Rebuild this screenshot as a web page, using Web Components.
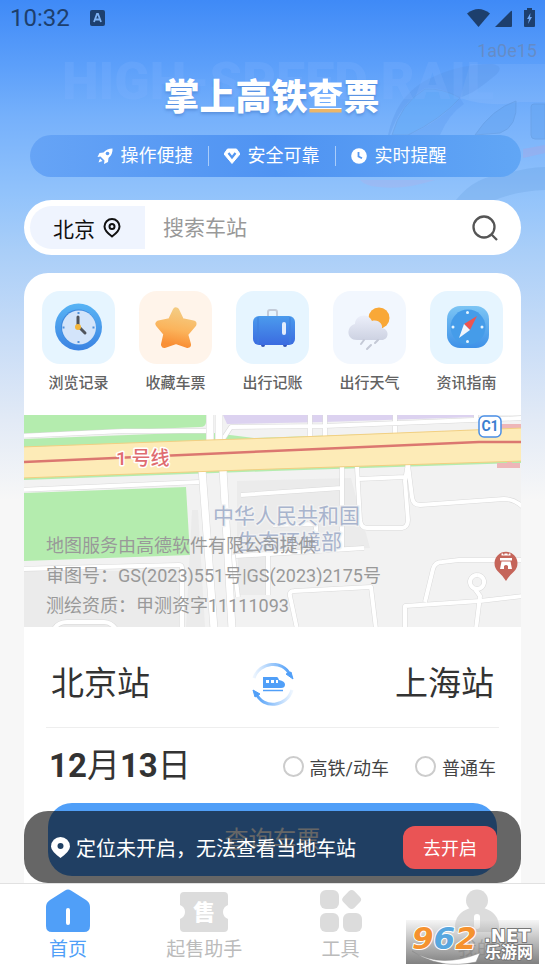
<!DOCTYPE html>
<html lang="zh-CN">
<head>
<meta charset="UTF-8">
<meta name="viewport" content="width=device-width, initial-scale=1">
<title>掌上高铁查票</title>
<style>
  body {
    margin: 0;
    background: #f7f7f7;
    color: #333;
    font-family: Roboto, "Noto Sans CJK SC", sans-serif;
  }
</style>
</head>
<body>
<app-screen>
  <status-bar slot="top" time="10:32"></status-bar>
  <hero-banner slot="top" tag="1a0e15" backdrop="HIGH-SPEED RAIL"></hero-banner>
  <search-bar slot="top" city="北京" hint="搜索车站"></search-bar>

  <feature-item slot="feature" label="浏览记录" tint="#e6f5ff">
    <svg viewBox="0 0 73 73">
      <defs><linearGradient id="ring" x1="0" y1="0" x2="0" y2="1"><stop offset="0" stop-color="#58b4f5"/><stop offset="1" stop-color="#3b83e2"/></linearGradient></defs>
      <circle cx="36.500" cy="36" r="23.500" fill="url(#ring)"/>
      <circle cx="36.500" cy="36" r="17.500" fill="#3f8ade"/>
      <circle cx="37" cy="36.500" r="17" fill="#d3e4fa"/>
      <path d="M36.500 21v2M36.500 50v2M20.500 36.500h2M50.500 36.500h2" stroke="#4f90dc" stroke-width="2"/>
      <path d="M36 36V26" stroke="#50545c" stroke-width="3" stroke-linecap="round"/>
      <path d="M37 36l6 6" stroke="#50545c" stroke-width="3" stroke-linecap="round"/>
      <circle cx="36" cy="36" r="3" fill="#f4b63b"/>
    </svg>
  </feature-item>
  <feature-item slot="feature" label="收藏车票" tint="#fff4ea">
    <svg viewBox="0 0 73 73">
      <defs><linearGradient id="star" x1="0.600" y1="0" x2="0.400" y2="1"><stop offset="0" stop-color="#f4ca80"/><stop offset=".55" stop-color="#fbb45c"/><stop offset="1" stop-color="#f98f35"/></linearGradient></defs>
      <path d="M37 20l5 10.500 12 2.500-8.500 10 3 10.500-11.500-4-11.500 4 2.500-11-8-9.500 12-2.500z" fill="url(#star)" stroke="url(#star)" stroke-width="7" stroke-linejoin="round"/>
    </svg>
  </feature-item>
  <feature-item slot="feature" label="出行记账" tint="#e6f5ff">
    <svg viewBox="0 0 73 73">
      <defs><linearGradient id="bag" x1="0" y1="0" x2="0" y2="1"><stop offset="0" stop-color="#4b9bed"/><stop offset="1" stop-color="#3b6be0"/></linearGradient></defs>
      <path d="M32 26v-5q0-2 2-2h5q2 0 2 2v5" fill="none" stroke="#c3cbd8" stroke-width="2"/>
      <circle cx="27" cy="54" r="2" fill="#3354b5"/><circle cx="49" cy="54" r="2" fill="#3354b5"/>
      <rect x="17" y="25" width="42" height="29" rx="6" fill="url(#bag)"/>
      <path d="M22 26v27M54 26v27" stroke="#3f80dd" stroke-width="1"/>
      <rect x="46" y="31" width="4" height="13" rx="2" fill="#e3edfc"/>
    </svg>
  </feature-item>
  <feature-item slot="feature" label="出行天气" tint="#f2f7fe">
    <svg viewBox="0 0 73 73">
      <defs><linearGradient id="cloud" x1="0" y1="0" x2="0" y2="1"><stop offset="0" stop-color="#eceffa"/><stop offset="1" stop-color="#cdd2e2"/></linearGradient></defs>
      <circle cx="46" cy="27" r="10.500" fill="#f9a837"/>
      <path d="M24 49c-11 0-11-14-2-16 0-9 13-12 17-3 7-2 11 4 10 7 9 2 6 13-1 12z" fill="url(#cloud)"/>
      <path d="M31 49l-3 4M45 49l-3 3M38 54l-4 4" stroke="#c4c9d6" stroke-width="2" stroke-linecap="round"/>
    </svg>
  </feature-item>
  <feature-item slot="feature" label="资讯指南" tint="#e6f5ff">
    <svg viewBox="0 0 73 73">
      <defs><linearGradient id="dial" x1="0" y1="0" x2="0" y2="1"><stop offset="0" stop-color="#7cc5f4"/><stop offset="1" stop-color="#3e91e8"/></linearGradient></defs>
      <rect x="17" y="15" width="42" height="42" rx="13" fill="url(#dial)"/>
      <circle cx="38" cy="36" r="17.500" fill="#459ce9"/>
      <circle cx="37.500" cy="21.500" r="1.500" fill="#e7f5ff"/><circle cx="37.500" cy="50.500" r="1.500" fill="#e7f5ff"/>
      <circle cx="23" cy="36" r="1.500" fill="#e7f5ff"/><circle cx="52" cy="36" r="1.500" fill="#e7f5ff"/>
      <path d="M47 25L34 33l6 6z" fill="#ed5450"/>
      <path d="M29 47l5-14 6 6z" fill="#f2f6fc"/>
    </svg>
  </feature-item>

  <station-map slot="body"></station-map>
  <trip-form slot="body" from="北京站" to="上海站" action="查询车票"></trip-form>
  <location-toast slot="toast" action="去开启">定位未开启，无法查看当地车站</location-toast>

  <tab-item slot="tab" label="首页" active>
    <svg viewBox="0 0 50 44">
      <path d="M22 1.500q3-2 6 0L43 11q4 2.500 4 7v19q0 6-6 6H9q-6 0-6-6V18q0-4.500 4-7z" fill="#509ff8"/>
      <path d="M25 21v13" stroke="#fff" stroke-width="4" stroke-linecap="round"/>
    </svg>
  </tab-item>
  <tab-item slot="tab" label="起售助手">
    <svg viewBox="0 0 50 44">
      <path d="M5 3h40q4 0 4 4v9q-5 2-5 7t5 7v9q0 4-4 4H5q-4 0-4-4v-9q5-2 5-7t-5-7V7q0-4 4-4z" fill="#dcdcdc"/>
      <text x="25" y="31" text-anchor="middle" font-size="22" font-weight="900" fill="#fff">售</text>
    </svg>
  </tab-item>
  <tab-item slot="tab" label="工具">
    <svg viewBox="0 0 50 44" fill="#dcdcdc">
      <rect x="4" y="1" width="19" height="19" rx="6"/>
      <rect x="28" y="3" width="15.500" height="15.500" rx="4" transform="rotate(45 36 10.500)"/>
      <rect x="4" y="24" width="19" height="19" rx="6"/>
      <rect x="27" y="24" width="19" height="19" rx="6"/>
    </svg>
  </tab-item>
  <tab-item slot="tab" label="我的">
    <svg viewBox="0 0 50 44">
      <circle cx="25" cy="11.500" r="11" fill="#dcdcdc"/>
      <path d="M18 19h14q15 5 15 19 0 5-5 5H8q-5 0-5-5 0-14 15-19z" fill="#dcdcdc"/>
      <path d="M25 28v9" stroke="#fff" stroke-width="6" stroke-linecap="round"/>
    </svg>
  </tab-item>
  <site-stamp slot="stamp"></site-stamp>
</app-screen>

<script>
class BaseElement extends HTMLElement {
  constructor() {
    super();
    this.attachShadow({ mode: "open" });
  }

  connectedCallback() {
    const template = document.createElement("template");
    template.innerHTML = this.getStyles() + this.getTemplate();
    this.shadowRoot.replaceChildren(template.content.cloneNode(true));
  }
}

class AppScreen extends BaseElement {
  getTemplate() {
    return `
      <main>
        <slot name="top"></slot>
        <section class="card">
          <div class="features"><slot name="feature"></slot></div>
          <slot name="body"></slot>
        </section>
        <div class="toast"><slot name="toast"></slot></div>
      </main>
      <nav>
        <slot name="tab"></slot>
        <div class="stamp"><slot name="stamp"></slot></div>
      </nav>
    `;
  }

  getStyles() {
    return `
      <style>
        :host {
          display: flex;
          flex-direction: column;
          min-height: 100vh;
          background: linear-gradient(#3f8af7 0, #5c9ffa 65px, #75b0fb 115px, #92c3fb 195px, #a9cef8 250px, #c5dbf7 330px, #e2eaf6 420px, #f7f7f7 500px);
        }
        main {
          position: relative;
          flex: 1;
          display: flex;
          flex-direction: column;
        }
        .card {
          flex: 1;
          margin: 18px 24px 0;
          background: #fff;
          border-radius: 24px 24px 0 0;
        }
        .features {
          display: grid;
          grid-template-columns: repeat(5, 1fr);
          gap: 24px;
          padding: 18px 18px 21px;
        }
        .toast {
          position: absolute;
          left: 24px;
          right: 24px;
          bottom: 0;
        }
        nav {
          position: relative;
          display: grid;
          grid-template-columns: repeat(4, 1fr);
          padding: 5px 0 3px;
          border-top: 1px solid #e1e1e1;
          background: #fff;
        }
        .stamp {
          position: absolute;
          right: 6px;
          bottom: 6px;
        }
      </style>
    `;
  }
}
customElements.define("app-screen", AppScreen);

class StatusBar extends BaseElement {
  getTemplate() {
    return `
      <span class="time">${this.getAttribute("time")}</span>
      <svg width="15" height="16" viewBox="0 0 15 16">
        <rect width="15" height="16" rx="2" fill="#1d406f"/>
        <path d="M4 12l3-8h1l3 8M5 9.500h5" stroke="#7db1f2" stroke-width="1.800" fill="none"/>
      </svg>
      <div class="signals">
        <svg width="68" height="20" viewBox="0 0 68 20" fill="#1d3f6d">
          <path d="M0 5.500Q11.500-3.500 23 5.500L11.500 19z"/>
          <path d="M28 19L44 3q1-1 1 1v14q0 1-1 1z"/>
          <path d="M57 2h3V0h5v2h3v16q0 1-1 1h-9q-1 0-1-1z"/>
          <path d="M63.500 5L60 11h2l-1 5 4-7h-2z" fill="#6ca6f4"/>
        </svg>
      </div>
    `;
  }

  getStyles() {
    return `
      <style>
        :host {
          display: flex;
          align-items: center;
          height: 36px;
          padding: 0 10px;
          color: #1d3f6d;
        }
        .time {
          font-size: 24px;
          line-height: 36px;
          margin-right: 20px;
        }
        .signals {
          margin-left: auto;
          display: flex;
        }
      </style>
    `;
  }
}
customElements.define("status-bar", StatusBar);

class HeroBanner extends BaseElement {
  getTemplate() {
    return `
      <svg class="train" width="185" height="140" viewBox="360 62 185 140">
        <path d="M470 64H545V102H520Q490 108 460 98z" fill="#fff" opacity=".07"/>
        <path d="M388 135Q396 98 423 82 455 64 492 64 504 66 497 74 484 85 473 92L460 98Q440 86 425 88 400 104 390 135z" fill="#5593e4" opacity=".3"/>
        <path d="M392 135Q401 103 425 89 443 88 460 98 440 120 408 135z" fill="#5ba7f5" opacity=".4" stroke="#5a91d4"/>
        <path d="M460 98Q440 122 408 135H440Q449 114 464 104z" fill="#4d8eea" opacity=".2"/>
        <path d="M475 135Q492 109 516 101 518 127 500 133z" fill="#62a2ee" opacity=".45" stroke="#5a91d4"/>
        <path d="M545 104H534q-3 0-3 3v28q0 4 4 4h10z" fill="#62a2ee" opacity=".45" stroke="#5a91d4"/>
        <path d="M523 149L545 145v8l-22 5z" fill="#b79fd9" opacity=".3"/>
        <path d="M360 180h75q-30 10-56 7-14-1-19-7z" fill="#c7a4dc" opacity=".2"/>
        <path d="M456 200Q476 175 504 175 525 167 545 167V190Q515 191 490 202z" fill="#548fd8" opacity=".2"/>
      </svg>
      <span class="tag">${this.getAttribute("tag")}</span>
      <span class="backdrop">${this.getAttribute("backdrop")}</span>
      <h1>掌上高铁<b>查</b>票</h1>
      <ul>
        <li>
          <svg width="16" height="16" viewBox="0 0 16 16">
            <path d="M15.500.5Q10 .5 6.500 4.500L2.500 5 .5 9l3-.5 4 4-.5 3.500 4-2 .5-4Q16 6 15.500.5z" fill="#fff"/>
            <circle cx="10.500" cy="5.500" r="1.800" fill="#5b9cf4"/>
            <path d="M3 10.500l-1.500 4 4-1.500z" fill="#fff"/>
          </svg>操作便捷
        </li>
        <li>
          <svg width="16" height="16" viewBox="0 0 16 16">
            <path d="M3.500 1h9L16 6 8 15.500 0 6z" fill="#fff" stroke="#fff" stroke-linejoin="round"/>
            <path d="M4.500 5L8 9.500 11.500 5" fill="none" stroke="#5396f1" stroke-width="2.200"/>
          </svg>安全可靠
        </li>
        <li>
          <svg width="16" height="16" viewBox="0 0 16 16">
            <circle cx="8" cy="8" r="7.800" fill="#fff"/>
            <path d="M7.500 4v4.500l3.500 1.800" fill="none" stroke="#5396f1" stroke-width="1.800"/>
          </svg>实时提醒
        </li>
      </ul>
    `;
  }

  getStyles() {
    return `
      <style>
        :host {
          display: block;
          position: relative;
          color: #fff;
          padding: 36px 24px 0 30px;
        }
        .train {
          position: absolute;
          right: 0;
          top: 26px;
        }
        .tag {
          position: absolute;
          right: 8px;
          top: 4px;
          font-size: 18px;
          line-height: 22px;
          color: rgba(110, 130, 165, .6);
        }
        .backdrop {
          position: absolute;
          left: 62px;
          top: 16px;
          font-size: 52px;
          line-height: 60px;
          font-weight: 900;
          white-space: nowrap;
          color: rgba(130, 180, 255, .24);
        }
        h1 {
          position: relative;
          margin: 0;
          padding-right: 8px;
          font-size: 36px;
          line-height: 52px;
          font-weight: 900;
          text-align: center;
          text-shadow: 0 2px 3px rgba(40, 90, 170, .35);
        }
        /* the last stroke of this character is orange */
        h1 b {
          font-weight: 900;
          color: transparent;
          text-shadow: none;
          background: linear-gradient(#fff 32px, #edb668 32px);
          -webkit-background-clip: text;
          background-clip: text;
        }
        ul {
          position: relative;
          display: flex;
          justify-content: center;
          align-items: center;
          height: 42px;
          margin: 11px 0 0;
          padding: 0 8px 0 0;
          list-style: none;
          border-radius: 21px;
          background: linear-gradient(90deg, #66a4f6, #4f93f2 50%, #61a6f5);
        }
        li {
          display: flex;
          align-items: center;
          gap: 8px;
          font-size: 18px;
          line-height: 20px;
        }
        li + li {
          margin-left: 15px;
          padding-left: 15px;
          border-left: 1px solid #a9ccfa;
        }
      </style>
    `;
  }
}
customElements.define("hero-banner", HeroBanner);

class SearchBar extends BaseElement {
  getTemplate() {
    return `
      <button class="city" type="button">
        ${this.getAttribute("city")}
        <svg width="18" height="20" viewBox="0 0 18 20" fill="none" stroke="#111" stroke-width="2">
          <path d="M9 18.500Q1.500 13 1.500 8.500a7.500 7.500 0 0 1 15 0Q16.500 13 9 18.500z"/>
          <circle cx="9" cy="8.500" r="2.500"/>
        </svg>
      </button>
      <input type="text" placeholder="${this.getAttribute("hint")}" aria-label="${this.getAttribute("hint")}">
      <button class="go" type="button" aria-label="搜索">
        <svg width="26" height="26" viewBox="0 0 26 26" fill="none" stroke="#555" stroke-width="2.300">
          <circle cx="12" cy="12" r="10.500"/>
          <path d="M19 19l6 6"/>
        </svg>
      </button>
    `;
  }

  getStyles() {
    return `
      <style>
        :host {
          display: flex;
          position: relative;
          height: 43px;
          margin: 23px 24px 0;
          padding: 6px;
          border-radius: 28px;
          background: #fff;
        }
        button, input {
          border: 0;
          font: inherit;
          font-size: 21px;
          background: none;
        }
        button {
          display: flex;
          align-items: center;
          cursor: pointer;
        }
        .city {
          gap: 8px;
          padding: 0 24px 0 23px;
          color: #111;
          background: #eff4fe;
          border-radius: 22px 0 0 22px;
        }
        input {
          flex: 1;
          min-width: 0;
          padding: 0 18px;
          outline: none;
        }
        input::placeholder {
          color: #999;
        }
        .go {
          padding: 0 17px;
        }
      </style>
    `;
  }
}
customElements.define("search-bar", SearchBar);

class FeatureItem extends BaseElement {
  getTemplate() {
    return `
      <a href="#">
        <span class="tile" style="background:${this.getAttribute("tint")}"><slot></slot></span>
        ${this.getAttribute("label")}
      </a>
    `;
  }

  getStyles() {
    return `
      <style>
        :host {
          display: block;
        }
        a {
          display: flex;
          flex-direction: column;
          align-items: center;
          gap: 8px;
          color: #626262;
          font-size: 15px;
          line-height: 22px;
          font-weight: 500;
          text-decoration: none;
          white-space: nowrap;
        }
        .tile {
          width: 100%;
          border-radius: 18px;
        }
        ::slotted(svg) {
          display: block;
          width: 73px;
          height: 73px;
          margin: 0 auto;
        }
      </style>
    `;
  }
}
customElements.define("feature-item", FeatureItem);

class StationMap extends BaseElement {
  getRoads() {
    return `
      M-5 21L100 16 182 16 M-5 75L176 67 M-5 154L155 150Q158 150 158 153V215 M30 214Q34 207 43 207H80Q87 207 92 214
      M199 24L207 12 300 11 400 7 500 3 M286-2V24 M301-2V23 M371-2V19 M452-2V5
      M217 80L317 73 M318 52V134 M209 140L214 182 M244 141V180 M212 141L340 133 M249 110L292 109V118
      M333 52L336 105Q337 113 343 113H378Q384 112 384 105L381 66 384 48
      M335 64L381 62 M384 50L388 82Q389 90 396 90L480 84Q490 84 499 92
      M401 187L409 154Q411 147 418 147L435 145H500 M381 214V191L456 186 500 181
      M453 160a7 7 0 1 0 .1 0M451 174L456 181 452 214
      M273 214L266 181Q265 176 270 176L347 172 352 214
    `;
  }

  getTemplate() {
    const roads = this.getRoads();
    return `
      <svg viewBox="0 0 497 212" preserveAspectRatio="xMidYMid slice" aria-hidden="true">
        <rect width="497" height="212" fill="#f2f2f2"/>
        <path d="M0 156H155V212H0zM168 95l6 0 7 117H162zM213 66L327 63 346 133 213 142zM214 142h30v38h-30z" fill="#ebebeb"/>
        <path d="M0 0H182V7Q182 12 176 12L0 19zM0 24L182 17 230 23 497 14V48L249 56 0 65zM0 78L162 72 166 140 0 146z" fill="#b4ecae"/>
        <path d="M199 0H452V2L300 7 203 9z" fill="#dcd2f0"/>
        <path d="M477 9h20v5h-20zM473 48h10v-3h5v3h8v5h-23z" fill="#eeb6b8"/>
        <g fill="none" stroke-linejoin="round">
          <path d="${roads}" stroke="#d9d9d9" stroke-width="5"/>
          <path d="${roads}" stroke="#fff" stroke-width="4"/>
          <path d="M186-2V27M195-2V27M178 54L190 214M199 54L208 214" stroke="#d9d9d9" stroke-width="8"/>
          <path d="M186-2V27M195-2V27M178 54L190 214M199 54L208 214" stroke="#fff" stroke-width="7"/>
        </g>
        <path d="M-2 32L185 25 249 23 499 13V46L249 54-2 63z" fill="#fdebb7" stroke="#f2cf82"/>
        <path d="M0 47L248 36 455 27H497" fill="none" stroke="#db7770" stroke-width="2.500"/>
        <g stroke="#fff" stroke-width="3" paint-order="stroke" stroke-linejoin="round">
          <text x="92" y="50" font-size="19" font-weight="500" fill="#df6c70">1 号线</text>
          <g font-size="21" fill="#a8b4cd" stroke="#f2f2f2">
            <text x="189" y="108">中华人民共和国</text>
            <text x="213" y="134">生态环境部</text>
          </g>
        </g>
        <rect x="455" y="1" width="22" height="21" rx="5" fill="#fff" stroke="#4a8fe6" stroke-width="1.500"/>
        <text x="466" y="16" text-anchor="middle" font-size="14" font-weight="700" fill="#3b7fd0">C1</text>
        <path d="M482 166Q479 161 474 156.500a11.500 11.500 0 1 1 16 0Q485 161 482 166z" fill="#c5655a"/>
        <path d="M476 143h12v2.500h-12zM477.500 140.500v-2h1.500v1h1.500v-1h3v1h1.500v-1h1.500v2zM477.500 146.500h9l1.500 7.500h-4v-3q-2-2-4 0v3h-4z" fill="#fff"/>
      </svg>
      <p>
        地图服务由高德软件有限公司提供<br>
        审图号：GS(2023)551号|GS(2023)2175号<br>
        测绘资质：甲测资字11111093
      </p>
    `;
  }

  getStyles() {
    return `
      <style>
        :host {
          display: grid;
          align-items: end;
        }
        svg, p {
          grid-area: 1 / 1;
        }
        svg {
          display: block;
          width: 100%;
          height: 212px;
        }
        p {
          margin: 0;
          padding: 0 22px 6px;
          font-size: 18px;
          line-height: 30px;
          color: #999;
        }
      </style>
    `;
  }
}
customElements.define("station-map", StationMap);

class TripForm extends BaseElement {
  getTemplate() {
    return `
      <form>
        <div class="stations">
          <button type="button">${this.getAttribute("from")}</button>
          <button type="button" aria-label="交换车站">
            <svg width="42" height="43" viewBox="0 0 42 43">
              <defs>
                <linearGradient id="fade-a"><stop offset="0" stop-color="#509ff8" stop-opacity=".1"/><stop offset="1" stop-color="#509ff8"/></linearGradient>
                <linearGradient id="fade-b"><stop offset="0" stop-color="#509ff8"/><stop offset="1" stop-color="#509ff8" stop-opacity=".1"/></linearGradient>
              </defs>
              <path d="M2 15C7-1 31-4 38 12" fill="none" stroke="url(#fade-a)" stroke-width="3"/>
              <path d="M34 11l5-2 2 7z" fill="#509ff8" stroke="#509ff8" stroke-linejoin="round"/>
              <path d="M40 27C35 44 11 47 4 30" fill="none" stroke="url(#fade-b)" stroke-width="3"/>
              <path d="M1 27l7 4-5 3z" fill="#509ff8" stroke="#509ff8" stroke-linejoin="round"/>
              <path d="M11 14h14q1 0 2 3 6 1 6 4.500 0 3.500-4 3.500H11z" fill="#509ff8"/>
              <path d="M14 17h3v3h-3zM19 17h3v3h-3zM24 17h2v3h-2z" fill="#fff"/>
              <path d="M11 27.500h20" stroke="#509ff8" stroke-width="1.500"/>
            </svg>
          </button>
          <button type="button">${this.getAttribute("to")}</button>
        </div>
        <div class="options">
          <button type="button" class="date"><b>12</b>月<b>13</b>日</button>
          <label><input type="radio" name="kind">高铁/动车</label>
          <label><input type="radio" name="kind">普通车</label>
        </div>
        <button type="button" class="query">${this.getAttribute("action")}</button>
      </form>
    `;
  }

  getStyles() {
    return `
      <style>
        :host {
          display: block;
          padding: 0 22px 7px;
        }
        form {
          margin: 0;
        }
        button {
          padding: 0;
          border: 0;
          background: none;
          font: inherit;
          font-size: 33px;
          line-height: 40px;
          color: inherit;
          cursor: pointer;
        }
        svg {
          display: block;
        }
        .stations {
          display: flex;
          justify-content: space-between;
          align-items: center;
          height: 86px;
          padding: 14px 5px 0;
          border-bottom: 1px solid #eee;
        }
        .options {
          display: flex;
          align-items: center;
          gap: 26px;
          height: 75px;
          padding: 0 3px;
        }
        .date {
          margin-right: auto;
        }
        label {
          display: flex;
          align-items: center;
          gap: 6px;
          padding-top: 2px;
          font-size: 18px;
          color: #444;
          white-space: nowrap;
        }
        input {
          appearance: none;
          width: 21px;
          height: 21px;
          margin: 0;
          border: 2px solid #ccc;
          border-radius: 50%;
        }
        input:checked {
          border: 6px solid #509ff8;
        }
        .query {
          display: block;
          width: calc(100% - 4px);
          height: 73px;
          margin: 0 auto;
          border-radius: 24px;
          background: #509ff8;
          color: #fff;
          font-size: 24px;
        }
      </style>
    `;
  }
}
customElements.define("trip-form", TripForm);

class LocationToast extends BaseElement {
  getTemplate() {
    return `
      <svg width="19" height="21" viewBox="0 0 19 21">
        <path d="M9.500 21Q0 14 0 9.500a9.500 9.500 0 0 1 19 0Q19 14 9.500 21z" fill="#fff"/>
        <circle cx="9.500" cy="9" r="3" fill="#204063"/>
      </svg>
      <span><slot></slot></span>
      <button type="button">${this.getAttribute("action")}</button>
    `;
  }

  getStyles() {
    return `
      <style>
        :host {
          display: flex;
          align-items: center;
          gap: 6px;
          height: 72px;
          padding: 0 24px 0 27px;
          border-radius: 24px;
          background: rgba(0, 0, 0, .6);
          color: #fff;
          font-size: 20px;
        }
        button {
          margin-left: auto;
          width: 94px;
          height: 43px;
          border: 0;
          border-radius: 12px;
          background: #ea5455;
          color: #fff;
          font: inherit;
          font-size: 18px;
          cursor: pointer;
        }
      </style>
    `;
  }
}
customElements.define("location-toast", LocationToast);

class TabItem extends BaseElement {
  getTemplate() {
    return `<a href="#"><slot></slot>${this.getAttribute("label")}</a>`;
  }

  getStyles() {
    return `
      <style>
        :host {
          display: block;
        }
        a {
          display: flex;
          flex-direction: column;
          align-items: center;
          color: #bbb;
          font-size: 19px;
          line-height: 34px;
          text-decoration: none;
        }
        :host([active]) a {
          color: #509ff8;
        }
        ::slotted(svg) {
          width: 50px;
          height: 44px;
        }
      </style>
    `;
  }
}
customElements.define("tab-item", TabItem);

class SiteStamp extends BaseElement {
  getTemplate() {
    return `
      <svg width="133" height="44" viewBox="0 0 133 44">
        <path d="M6 31Q34 49 74 33L70 42Q34 50 6 31z" fill="#fff" stroke="#888" stroke-width=".5"/>
        <g font-family="DejaVu Sans" font-size="31" font-weight="700" font-style="italic" stroke="#fff" stroke-width="2" paint-order="stroke" stroke-linejoin="round">
          <text x="6" y="29"><tspan fill="#f5922f">9</tspan><tspan fill="#58a7df">6</tspan><tspan fill="#f5922f">2</tspan></text>
        </g>
        <g fill="#fff" stroke="#777" stroke-width="2" paint-order="stroke" stroke-linejoin="round" font-weight="700">
          <text x="78" y="22" font-family="DejaVu Sans" font-size="18">.NET</text>
          <text x="79" y="38" font-size="16">乐游网</text>
        </g>
      </svg>
    `;
  }

  getStyles() {
    return `
      <style>
        :host {
          display: block;
          background: linear-gradient(rgba(225, 225, 225, .3), rgba(115, 115, 115, .9));
        }
        svg {
          display: block;
          overflow: visible;
        }
      </style>
    `;
  }
}
customElements.define("site-stamp", SiteStamp);
</script>
</body>
</html>
